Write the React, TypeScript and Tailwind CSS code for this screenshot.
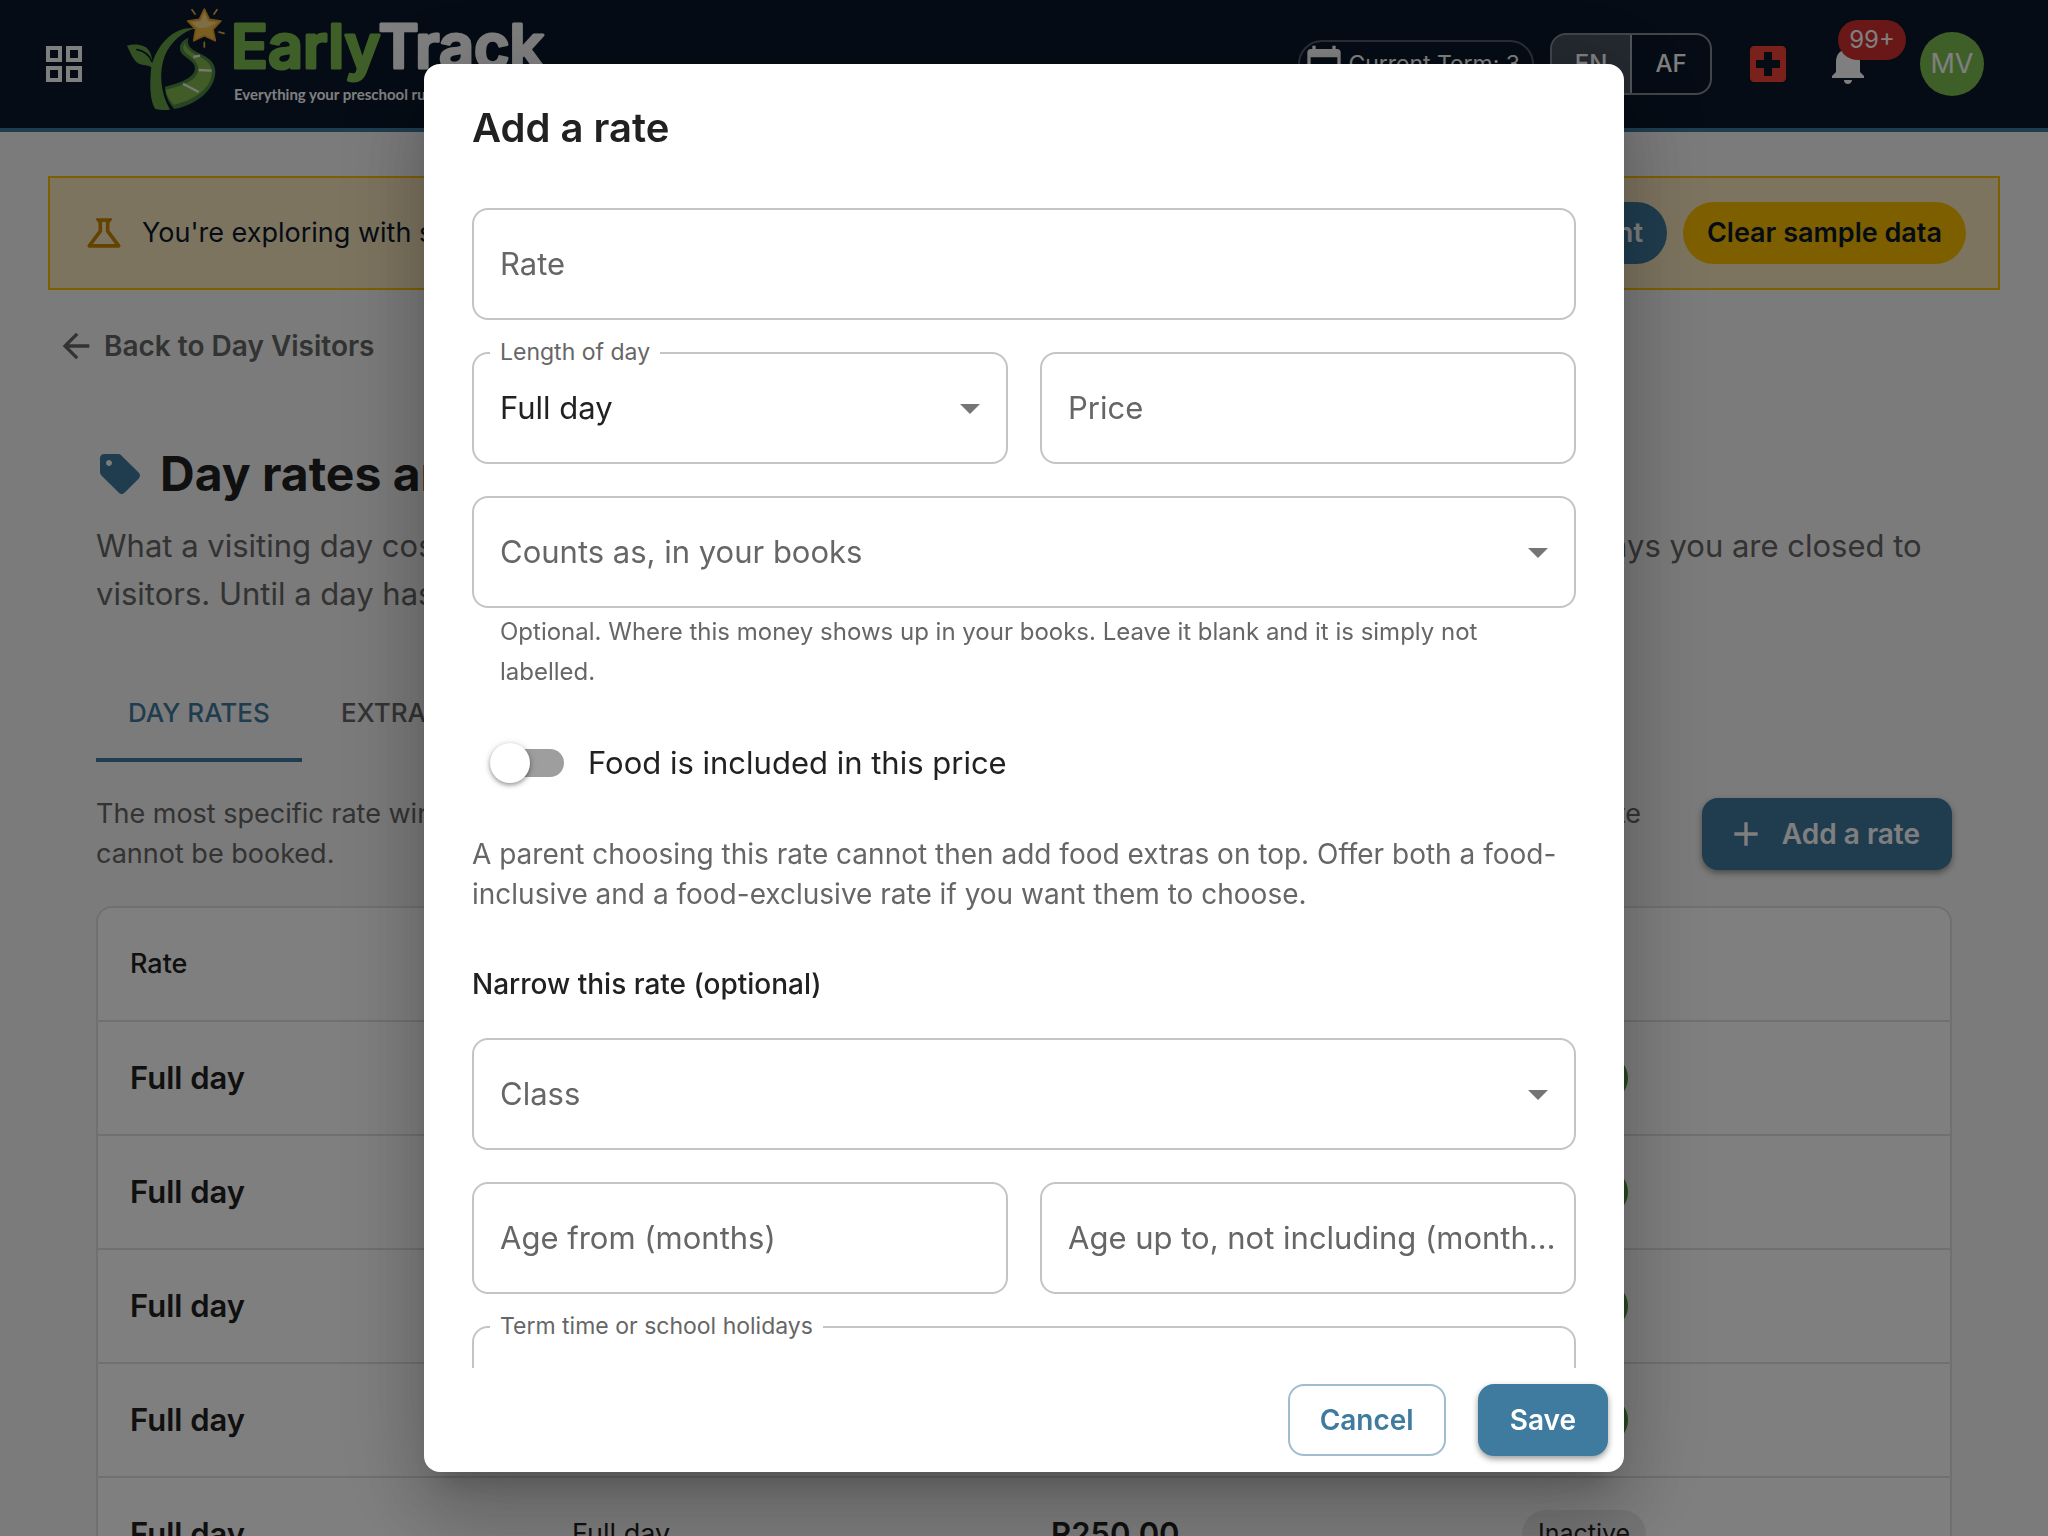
import { useState } from "react"
import type { ReactNode } from "react"
import {
  MdAdd,
  MdArrowBack,
  MdArrowDropDown,
  MdCalendarToday,
  MdGridView,
  MdLocalHospital,
  MdNotifications,
  MdOutlineScience,
  MdSell,
} from "react-icons/md"

const RATES = [
  { id: 1, name: "Full day", length: "Full day", price: "R180.00", active: true },
  { id: 2, name: "Full day", length: "Full day", price: "R200.00", active: true },
  { id: 3, name: "Full day", length: "Full day", price: "R220.00", active: true },
  { id: 4, name: "Full day", length: "Full day", price: "R240.00", active: true },
  { id: 5, name: "Full day", length: "Full day", price: "R250.00", active: false },
]

function Logo() {
  return (
    <svg width="440" height="128" viewBox="0 0 440 128" role="img" aria-label="EarlyTrack">
      <g transform="translate(3 0) scale(0.33333)" strokeLinecap="round" strokeLinejoin="round">
        {/* stem and leaf */}
        <path d="M121 327C106 305 104 262 107 222C108 185 128 138 162 110C186 90 214 81 242 85C204 94 168 125 150 166C132 212 134 275 165 329Q140 332 121 327Z" fill="#67a046" />
        <path d="M36 137C60 130 92 132 104 155C111 168 112 184 115 208C108 198 100 197 85 195C58 192 50 165 36 137Z" fill="#67a046" />
        <path d="M66 149C86 152 104 165 110 184" fill="none" stroke="#0a182a" strokeWidth="5" />
        {/* road */}
        <path d="M221 113C197 122 190 140 198 157C209 176 240 182 240 206C238 234 194 249 150 260C150 288 164 311 178 327C244 314 300 270 301 215C301 166 240 163 224 140C218 131 217 122 221 113Z" fill="#4f8a44" />
        <path d="M210 128C202 140 204 150 214 160C228 172 249 184 250 207C249 240 204 258 152 269C155 286 166 302 176 314C236 303 290 264 291 217C290 178 250 172 226 153C216 145 210 137 210 128Z" fill="#83b84c" />
        <path d="M235 171L255 167M251 210L290 212M204 251L251 276" stroke="#f2f2f2" strokeWidth="7" strokeLinecap="butt" />
        {/* star */}
        <path d="M268 27L283 58L318 63L294 88L301 122L268 107L236 122L242 88L218 63L253 58Z" fill="#f7bf45" stroke="#e79f2c" strokeWidth="5" />
        <path d="M268 36L279 64L305 68Q262 92 244 80L230 67L257 64Z" fill="#fbdc8a" />
        <path d="M231 29L240 42M306 29L297 42M312 96L327 100M268 127L268 141" stroke="#efb03a" strokeWidth="5" />
      </g>
      <text x="119" y="68" fontFamily="Inter, sans-serif" fontWeight="600" fontSize="61" strokeWidth="3" strokeLinejoin="round">
        <tspan fill="#7fbf53" stroke="#7fbf53">Early</tspan>
        <tspan fill="#ffffff" stroke="#ffffff">Track</tspan>
      </text>
      <text x="122" y="100" fontFamily="Lato, sans-serif" fontWeight="700" fontSize="15" fill="#ffffff">
        Everything your preschool runs on
      </text>
    </svg>
  )
}

function Header() {
  return (
    <header className="flex h-[132px] shrink-0 items-center border-b-4 border-[#3f7b9f] bg-[#0a182a] pl-10 pr-16 text-white">
      <button type="button" aria-label="Open menu" className="mr-6">
        <MdGridView size={48} />
      </button>
      <a href="#home" className="mr-auto">
        <Logo />
      </a>
      <div className="flex h-12 items-center gap-1 rounded-full border-2 border-white/30 pl-1 pr-3 text-[23px]">
        <MdCalendarToday size={40} />
        Current Term: 3
      </div>
      <div className="ml-4 flex h-[62px] w-[162px] overflow-hidden rounded-2xl border-2 border-white/50 text-[24px] font-medium">
        <button type="button" className="flex-1 border-r-2 border-white/50 bg-white/25">EN</button>
        <button type="button" className="flex-1">AF</button>
      </div>
      <button type="button" aria-label="Emergency" className="ml-8 text-[#f44336]">
        <MdLocalHospital size={48} />
      </button>
      <button type="button" aria-label="Notifications" className="relative ml-8">
        <MdNotifications size={48} />
        <span className="absolute -top-5 left-3.5 flex h-10 w-[68px] items-center justify-center rounded-full bg-[#d32f2f] text-[24px]">
          99+
        </span>
      </button>
      <button type="button" className="ml-12 h-16 w-16 rounded-full bg-[#7fbf53] text-[27px]">MV</button>
    </header>
  )
}

function Banner() {
  return (
    <div className="flex h-[114px] items-center gap-4 border-2 border-[#fdbf00] bg-[#fbe9bf] px-8 text-[#0a182a]">
      <MdOutlineScience size={44} className="text-[#c98400]" />
      <p className="mr-auto text-[27px]">You're exploring with sample data.</p>
      <button type="button" className="h-[62px] rounded-full bg-[#3f7b9f] px-6 text-[27px] font-semibold text-white">
        Set up my account
      </button>
      <button type="button" className="h-[62px] rounded-full bg-[#fdbf00] px-6 text-[27px] font-semibold">
        Clear sample data
      </button>
    </div>
  )
}

function RatesTable() {
  return (
    <div className="mt-8 overflow-hidden rounded-2xl border-2 border-[#e0e0e0] bg-white">
      <table className="w-full table-fixed border-separate border-spacing-0 text-left">
        <thead>
          <tr className="h-[114px] text-[27px]">
            <th className="w-[442px] border-b-2 border-[#e0e0e0] px-8 font-medium">Rate</th>
            <th className="w-[479px] border-b-2 border-[#e0e0e0] px-8 font-medium">Length of day</th>
            <th className="w-[471px] border-b-2 border-[#e0e0e0] px-8 font-medium">Price</th>
            <th className="border-b-2 border-[#e0e0e0] px-8 font-medium" aria-label="Status" />
          </tr>
        </thead>
        <tbody>
          {RATES.map(r => (
            <tr key={r.id} className="h-[114px]">
              <td className="border-b-2 border-[#e0e0e0] px-8 text-[31px] font-semibold">{r.name}</td>
              <td className="border-b-2 border-[#e0e0e0] px-8 text-[27px]">{r.length}</td>
              <td className="border-b-2 border-[#e0e0e0] px-8 text-[31px] font-semibold">{r.price}</td>
              <td className="border-b-2 border-[#e0e0e0] px-8">
                {r.active ? (
                  <span className="inline-flex h-12 items-center rounded-full bg-[#4a9438] px-4 align-middle text-[25px] text-white">Active</span>
                ) : (
                  <span className="inline-flex h-12 items-center rounded-full bg-[#ebebeb] px-4 align-middle text-[25px]">Inactive</span>
                )}
              </td>
            </tr>
          ))}
        </tbody>
      </table>
    </div>
  )
}

function DayRatesPage() {
  return (
    <main className="px-12 pt-11">
      <Banner />
      <a href="#day-visitors" className="mt-7 ml-2 flex h-14 w-fit items-center gap-2 text-[28px] font-semibold text-[#666]">
        <MdArrowBack size={40} />
        Back to Day Visitors
      </a>
      <div className="px-12 pt-[76px]">
        <h1 className="flex h-12 items-center gap-4 text-[48px] font-bold">
          <MdSell size={48} className="text-[#3f7b9f]" />
          Day rates and extras
        </h1>
        <p className="mt-6 text-[31px] leading-[48px] text-[#666]">
          What a visiting day costs, what can be added to it such as a supper or aftercare, and the holidays and days you are closed to
          <br />
          visitors. Until a day has a rate, parents cannot book it.
        </p>
        <div role="tablist" className="mt-12 flex h-24 text-[26px] font-medium text-[#666]">
          <button type="button" role="tab" aria-selected="true" className="min-w-[180px] border-b-4 border-[#3f7b9f] px-8 text-[#3f7b9f]">DAY RATES</button>
          <button type="button" role="tab" aria-selected="false" className="min-w-[180px] border-b-4 border-transparent px-8">EXTRAS</button>
          <button type="button" role="tab" aria-selected="false" className="min-w-[180px] border-b-4 border-transparent px-8">CLOSED DAYS</button>
        </div>
        <div className="mt-8 flex items-center justify-between">
          <p className="text-[27px] leading-[40px] text-[#666]">
            The most specific rate wins, so a rate for one class beats a rate for everyone. Any visiting days with no matching day rate
            <br />
            cannot be booked.
          </p>
          <button type="button" className="flex h-[72px] shrink-0 items-center gap-4 rounded-2xl bg-[#3f7b9f] pr-8 pl-6 text-[28px] font-semibold text-white shadow-[0_3px_6px_rgba(0,0,0,0.4)]">
            <MdAdd size={40} />
            Add a rate
          </button>
        </div>
        <RatesTable />
      </div>
    </main>
  )
}

const box = "col-start-1 row-start-1 h-28 w-full rounded-2xl border-2 border-[#c4c4c4] bg-white px-[26px] text-[31px] outline-none"

function TextField({ id, label }: { id: string; label: string }) {
  return (
    <div className="grid min-w-0 flex-1 items-center">
      <input id={id} type="text" className={box} />
      <label htmlFor={id} className="pointer-events-none col-start-1 row-start-1 mr-5 ml-7 truncate text-[31px] text-[#666]">
        {label}
      </label>
    </div>
  )
}

type SelectFieldProps = { id: string; label: string; floating?: boolean; children?: ReactNode }

function SelectField({ id, label, floating, children }: SelectFieldProps) {
  return (
    <div className="relative grid min-w-0 flex-1 items-center">
      <select id={id} className={`${box} appearance-none`}>
        {children}
      </select>
      <MdArrowDropDown size={48} className="pointer-events-none col-start-1 row-start-1 mr-3.5 justify-self-end text-[#757575]" />
      {floating ? (
        <label htmlFor={id} className="absolute -top-4 left-[18px] bg-white px-2.5 text-[23px] leading-8 text-[#666]">
          {label}
        </label>
      ) : (
        <label htmlFor={id} className="pointer-events-none col-start-1 row-start-1 mx-7 text-[31px] text-[#666]">
          {label}
        </label>
      )}
    </div>
  )
}

function AddRateDialog() {
  const [food, setFood] = useState(false)

  return (
    <div className="fixed inset-0 flex items-center justify-center bg-black/50">
      <form
        role="dialog"
        aria-modal="true"
        aria-labelledby="add-rate-title"
        className="flex max-h-[calc(100%-128px)] w-full max-w-[1200px] flex-col rounded-2xl bg-white shadow-[0_22px_30px_-14px_rgba(0,0,0,0.2),0_48px_76px_6px_rgba(0,0,0,0.14),0_18px_92px_16px_rgba(0,0,0,0.12)]"
      >
        <h2 id="add-rate-title" className="px-12 py-8 text-[40px] leading-[64px] font-semibold">Add a rate</h2>

        <div className="flex min-h-0 flex-1 flex-col gap-8 overflow-y-auto px-12 pt-4 [scrollbar-width:none] *:shrink-0">
          <div className="flex">
            <TextField id="rate" label="Rate" />
          </div>
          <div className="flex gap-8">
            <SelectField id="length" label="Length of day" floating>
              <option>Full day</option>
              <option>Half day</option>
            </SelectField>
            <TextField id="price" label="Price" />
          </div>
          <div>
            <SelectField id="books" label="Counts as, in your books" />
            <p className="mt-1 mr-16 ml-7 text-[24px] leading-10 text-[#666]">
              Optional. Where this money shows up in your books. Leave it blank and it is simply not labelled.
            </p>
          </div>
          <label className="flex h-[78px] items-center gap-6 pl-6 text-[31px]">
            <span className="relative flex h-7 w-[68px] items-center rounded-full bg-[#9e9e9e]">
              <input
                type="checkbox"
                role="switch"
                checked={food}
                onChange={e => setFood(e.target.checked)}
                className="absolute -left-1.5 h-10 w-10 appearance-none rounded-full bg-white shadow-[0_2px_4px_rgba(0,0,0,0.35),0_1px_8px_rgba(0,0,0,0.14)] checked:left-8"
              />
            </span>
            Food is included in this price
          </label>
          <p className="text-[28px] leading-10 text-[#666]">
            A parent choosing this rate cannot then add food extras on top. Offer both a food-inclusive and a food-exclusive rate if you want them to choose.
          </p>
          <h3 className="pt-4 text-[28px] leading-[44px] font-medium">Narrow this rate (optional)</h3>
          <SelectField id="class" label="Class" />
          <div className="flex gap-8">
            <TextField id="age-from" label="Age from (months)" />
            <TextField id="age-to" label="Age up to, not including (months)" />
          </div>
          <SelectField id="term" label="Term time or school holidays" floating>
            <option value=""></option>
          </SelectField>
        </div>

        <div className="flex justify-end gap-8 p-4 text-[28px] font-semibold">
          <button type="button" className="h-[72px] rounded-2xl border-2 border-[#9fbdcf] px-[30px] text-[#3f7b9f]">Cancel</button>
          <button type="submit" className="h-[72px] rounded-2xl bg-[#3f7b9f] px-8 text-white shadow-[0_3px_6px_rgba(0,0,0,0.4)]">Save</button>
        </div>
      </form>
    </div>
  )
}

export default function App() {
  return (
    <div className="h-screen overflow-hidden bg-[#f6f6f6] font-[Inter,sans-serif] text-[#212121]">
      <Header />
      <DayRatesPage />
      <AddRateDialog />
    </div>
  )
}
